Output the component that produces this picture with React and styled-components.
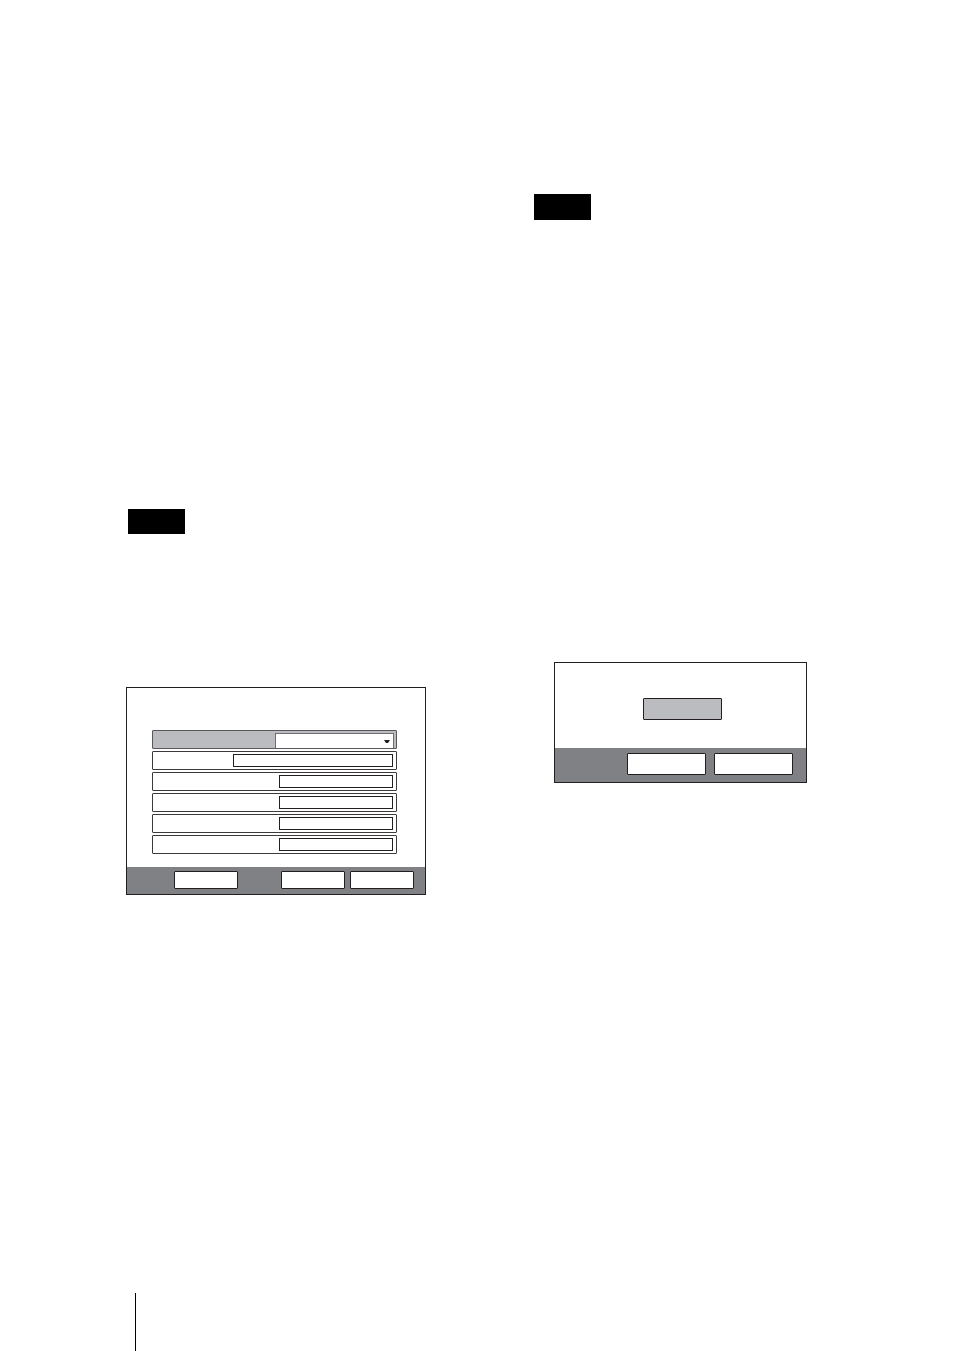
import { useState } from "react";
import styled, { createGlobalStyle } from "styled-components";

const GlobalStyle = createGlobalStyle`
  *, *::before, *::after {
    box-sizing: border-box;
  }
  body {
    margin: 0;
    background-color: #ffffff;
    font-family: "Liberation Sans", Arial, sans-serif;
    font-size: 10px;
  }
`;

const Page = styled.div`
  display: flex;
  flex-direction: column;
  min-height: 100vh;
`;

const Columns = styled.main`
  display: grid;
  grid-template-columns: 1fr 1fr;
  column-gap: 108px;
  align-items: start;
  padding: 194px 120px 0 126px;
`;

const Column = styled.section`
  display: flex;
  flex-direction: column;
  padding-top: ${(props) => props.$top || 0}px;
`;

const Tag = styled.div`
  width: 57px;
  height: ${(props) => props.$height}px;
  margin-left: ${(props) => props.$indent || 0}px;
  background-color: #000000;
`;

const Panel = styled.form`
  display: flex;
  flex-direction: column;
  border: 1px solid #231f20;
`;

const SettingsPanel = styled(Panel)`
  margin-top: 153px;
`;

const ConfirmPanel = styled(Panel)`
  margin: 442px 27px 0 20px;
`;

const Rows = styled.div`
  display: flex;
  flex-direction: column;
  gap: 2px;
  padding: 42px 28px 13px 25px;
`;

const Row = styled.div`
  display: flex;
  justify-content: flex-end;
  height: 19px;
  padding: ${(props) => (props.$active ? "2px 2px 0" : "2px 3px")};
  border: 1px solid ${(props) => (props.$active ? "#58585a" : "#3c3a3c")};
  border-radius: 1px;
  background-color: ${(props) => (props.$active ? "#bbbcbf" : "#ffffff")};
`;

const Field = styled.input`
  width: ${(props) => (props.$wide ? 160 : 114)}px;
  height: 13px;
  padding: 0 3px;
  border: 1px solid #231f20;
  border-radius: 0;
  background-color: #ffffff;
  font: inherit;
`;

const SelectBox = styled.div`
  position: relative;
  width: 119px;
  height: 15px;

  svg {
    position: absolute;
    top: 7px;
    right: 4px;
    pointer-events: none;
  }
`;

const Select = styled.select`
  display: block;
  width: 100%;
  height: 100%;
  padding: 0 12px 0 3px;
  border: 1px solid #6d6e70;
  border-bottom: 0;
  border-radius: 1px 1px 0 0;
  background-color: #ffffff;
  font: inherit;
  appearance: none;
`;

const Bar = styled.div`
  display: flex;
  justify-content: flex-end;
  background-color: #808184;
`;

const SettingsBar = styled(Bar)`
  gap: 5px;
  height: 27px;
  padding: 4px 11px 0 47px;
`;

const ConfirmBar = styled(Bar)`
  gap: 8px;
  height: 34px;
  padding: 5px 13px 0;
`;

const ConfirmBody = styled.div`
  display: flex;
  padding: 35px 83px 28px 88px;
`;

const Button = styled.button`
  width: 79px;
  height: 22px;
  padding: 0;
  border: 1px solid #231f20;
  border-radius: 1px;
  background-color: ${(props) => (props.$selected ? "#bbbcbf" : "#ffffff")};
  font: inherit;
`;

const SmallButton = styled(Button)`
  width: 64px;
  height: 18px;
`;

const FirstButton = styled(SmallButton)`
  margin-right: auto;
`;

const Footer = styled.footer`
  height: 58px;
  margin-top: auto;
  margin-left: 135px;
  border-left: 1px solid #000000;
`;

const fields = [
  { id: "name", label: "Name", wide: true },
  { id: "value1", label: "Value 1" },
  { id: "value2", label: "Value 2" },
  { id: "value3", label: "Value 3" },
  { id: "value4", label: "Value 4" },
];

function App() {
  const [values, setValues] = useState({});

  const handleChange = (e) =>
    setValues({ ...values, [e.target.name]: e.target.value });

  return (
    <Page>
      <GlobalStyle />
      <Columns>
        <Column $top={315}>
          <Tag $height={25} $indent={2} />
          <SettingsPanel>
            <Rows>
              <Row $active>
                <SelectBox>
                  <Select aria-label="Mode" name="mode" />
                  <svg width="6" height="3" viewBox="0 0 6 3">
                    <path d="M0 0H6L4 3H2Z" fill="#231f20" />
                  </svg>
                </SelectBox>
              </Row>
              {fields.map((field) => (
                <Row key={field.id}>
                  <Field
                    type="text"
                    name={field.id}
                    aria-label={field.label}
                    $wide={field.wide}
                    value={values[field.id] || ""}
                    onChange={handleChange}
                  />
                </Row>
              ))}
            </Rows>
            <SettingsBar>
              <FirstButton type="button" aria-label="Back" />
              <SmallButton type="button" aria-label="Apply" />
              <SmallButton type="button" aria-label="Cancel" />
            </SettingsBar>
          </SettingsPanel>
        </Column>

        <Column>
          <Tag $height={26} />
          <ConfirmPanel>
            <ConfirmBody>
              <Button type="button" aria-label="Select" $selected />
            </ConfirmBody>
            <ConfirmBar>
              <Button type="button" aria-label="OK" />
              <Button type="button" aria-label="Close" />
            </ConfirmBar>
          </ConfirmPanel>
        </Column>
      </Columns>
      <Footer />
    </Page>
  );
}

export default App;
